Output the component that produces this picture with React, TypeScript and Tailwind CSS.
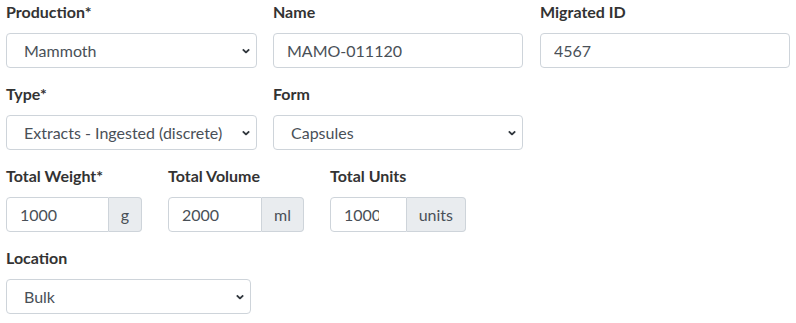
import React from 'react';

const font = { fontFamily: 'Lato, "Liberation Sans", sans-serif' };

function Label({ children }: { children: React.ReactNode }) {
  return <label className="block text-[16px] font-bold leading-[22px] text-[#333] mb-[10px]">{children}</label>;
}

function Chevron() {
  return (
    <svg className="absolute right-[7px] top-1/2 -translate-y-1/2 pointer-events-none" width="8" height="5" viewBox="0 0 8 5">
      <path d="M0.8 0.8l3.2 3.2L7.2 0.8" fill="none" stroke="#343a40" strokeWidth="1.8" />
    </svg>
  );
}

function Select({ value, width }: { value: string; width: string }) {
  return (
    <div className={`relative ${width}`}>
      <select
        defaultValue={value}
        className="appearance-none w-full h-[35px] rounded-[4px] border border-[#ced4da] bg-white pl-[17px] pr-6 text-[16px] text-[#495057] outline-none"
      >
        <option>{value}</option>
      </select>
      <Chevron />
    </div>
  );
}

function TextInput({ value }: { value: string }) {
  return (
    <input
      defaultValue={value}
      className="w-full h-[35px] rounded-[4px] border border-[#ced4da] bg-white px-[13px] text-[16px] text-[#495057] outline-none"
    />
  );
}

function Group({ value, unit, pr }: { value: string; unit: string; pr?: string }) {
  return (
    <div className="flex w-[136px] h-[35px]">
      <input
        defaultValue={value}
        className={`min-w-0 flex-1 rounded-l-[4px] border border-[#ced4da] bg-white pl-[13px] ${pr ?? 'pr-3'} text-[16px] text-[#495057] outline-none`}
      />
      <span className="flex items-center rounded-r-[4px] border border-l-0 border-[#ced4da] bg-[#e9ecef] px-3 text-[16px] text-[#495057]">
        {unit}
      </span>
    </div>
  );
}

export default function App() {
  return (
    <div className="bg-white w-[796px] h-[323px] pl-[6px] pt-[1px] flex flex-col gap-[15px]" style={font}>
      {/* row 1 */}
      <div className="flex gap-[17px]">
        <div className="w-[250px]">
          <Label>Production*</Label>
          <Select value="Mammoth" width="w-[251px]" />
        </div>
        <div className="w-[250px]">
          <Label>Name</Label>
          <TextInput value="MAMO-011120" />
        </div>
        <div className="w-[250px]">
          <Label>Migrated ID</Label>
          <TextInput value="4567" />
        </div>
      </div>

      {/* row 2 */}
      <div className="flex gap-[17px]">
        <div className="w-[250px]">
          <Label>Type*</Label>
          <Select value="Extracts - Ingested (discrete)" width="w-[251px]" />
        </div>
        <div className="w-[250px]">
          <Label>Form</Label>
          <Select value="Capsules" width="w-[250px]" />
        </div>
      </div>

      {/* row 3 */}
      <div className="flex gap-[26px]">
        <div>
          <Label>Total Weight*</Label>
          <Group value="1000" unit="g" />
        </div>
        <div>
          <Label>Total Volume</Label>
          <Group value="2000" unit="ml" />
        </div>
        <div>
          <Label>Total Units</Label>
          <Group value="1000" unit="units" pr="pr-[27px]" />
        </div>
      </div>

      {/* row 4 */}
      <div>
        <Label>Location</Label>
        <Select value="Bulk" width="w-[245px]" />
      </div>
    </div>
  );
}
